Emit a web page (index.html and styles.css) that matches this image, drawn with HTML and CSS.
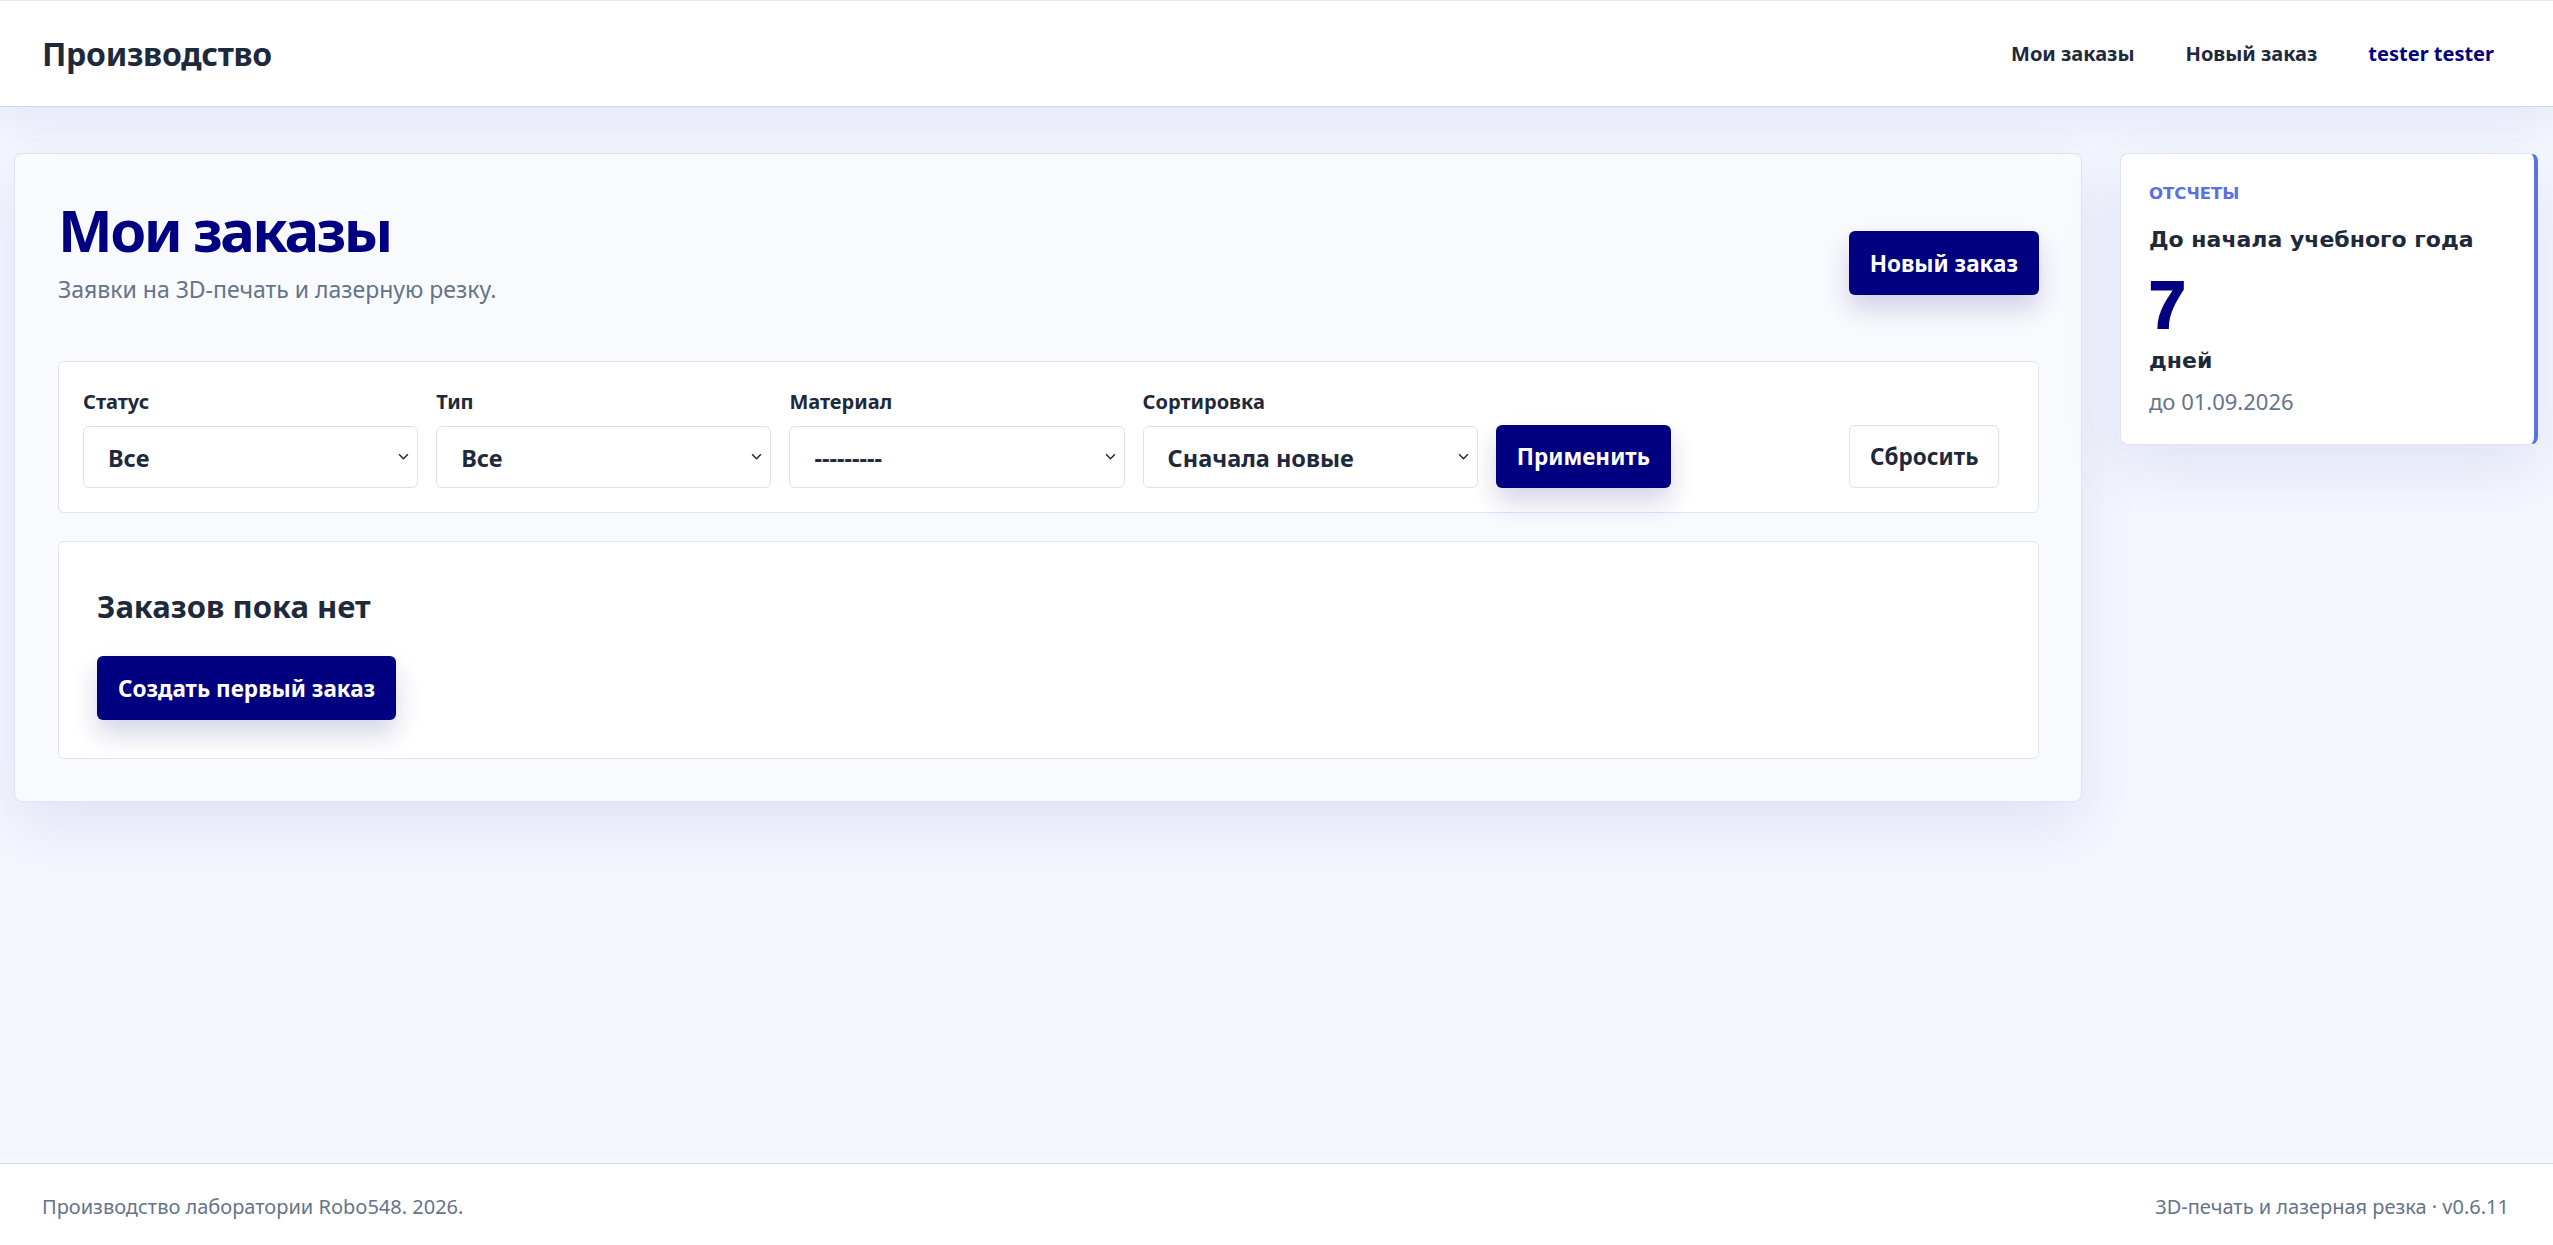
FILE: index.html
```html
<!DOCTYPE html>
<html lang="ru">
<head>
  <meta charset="UTF-8">
  <meta name="viewport" content="width=device-width, initial-scale=1.0">
  <title>Мои заказы — Производство</title>
  <link rel="stylesheet" href="styles.css">
</head>
<body>
  <header class="topbar">
    <a class="brand" href="#">Производство</a>
    <nav class="topnav">
      <a href="#">Мои заказы</a>
      <a href="#">Новый заказ</a>
      <a href="#" class="user">tester tester</a>
    </nav>
  </header>

  <main class="layout">
    <section class="panel">
      <div class="panel-head">
        <div>
          <h1>Мои заказы</h1>
          <p class="lead">Заявки на 3D-печать и лазерную резку.</p>
        </div>
        <a href="#" class="btn btn-primary head-btn">Новый заказ</a>
      </div>

      <form class="filters">
        <div class="field">
          <label for="status">Статус</label>
          <div class="select-wrap">
            <select id="status">
              <option>Все</option>
            </select>
            <svg class="chevron" viewBox="0 0 10 6"><path d="M1 1l4 4 4-4"/></svg>
          </div>
        </div>
        <div class="field">
          <label for="kind">Тип</label>
          <div class="select-wrap">
            <select id="kind">
              <option>Все</option>
            </select>
            <svg class="chevron" viewBox="0 0 10 6"><path d="M1 1l4 4 4-4"/></svg>
          </div>
        </div>
        <div class="field">
          <label for="material">Материал</label>
          <div class="select-wrap">
            <select id="material">
              <option>---------</option>
            </select>
            <svg class="chevron" viewBox="0 0 10 6"><path d="M1 1l4 4 4-4"/></svg>
          </div>
        </div>
        <div class="field">
          <label for="sort">Сортировка</label>
          <div class="select-wrap">
            <select id="sort">
              <option>Сначала новые</option>
            </select>
            <svg class="chevron" viewBox="0 0 10 6"><path d="M1 1l4 4 4-4"/></svg>
          </div>
        </div>
        <div class="field field-btn">
          <button type="submit" class="btn btn-primary">Применить</button>
        </div>
        <div class="field field-btn">
          <button type="reset" class="btn btn-light">Сбросить</button>
        </div>
      </form>

      <div class="empty">
        <h2>Заказов пока нет</h2>
        <a href="#" class="btn btn-primary">Создать первый заказ</a>
      </div>
    </section>

    <aside class="side">
      <div class="stat-card">
        <div class="stat-label">Отсчеты</div>
        <div class="stat-title">До начала учебного года</div>
        <div class="stat-value">7</div>
        <div class="stat-unit">дней</div>
        <div class="stat-note">до 01.09.2026</div>
      </div>
    </aside>
  </main>

  <footer class="footer">
    <span>Производство лаборатории Robo548. 2026.</span>
    <span>3D-печать и лазерная резка · v0.6.11</span>
  </footer>
</body>
</html>
```

FILE: styles.css
```css
/* Общие стили */
* {
  box-sizing: border-box;
}

html,
body {
  margin: 0;
  min-height: 100%;
}

body {
  min-height: 100vh;
  display: flex;
  flex-direction: column;
  font-family: "Segoe UI", "Noto Sans", "Open Sans", sans-serif;
  color: #1e293b;
  background: #f4f7fe;
}

a {
  text-decoration: none;
  color: inherit;
}

/* Шапка */
.topbar {
  position: relative;
  z-index: 2;
  height: 107px;
  display: flex;
  align-items: center;
  justify-content: space-between;
  padding: 0 59px 0 42px;
  background: #fff;
  border-top: 1px solid #e6e8ee;
  border-bottom: 1px solid #d3d6ef;
  box-shadow: 0 14px 44px rgba(50, 60, 170, 0.09);
}

.brand {
  font-size: 32px;
  line-height: 40px;
  font-weight: 700;
  color: #1e293b;
  letter-spacing: -0.3px;
}

.topnav {
  display: flex;
  gap: 51px;
}

.topnav a {
  font-size: 20px;
  line-height: 30px;
  font-weight: 700;
  color: #1e293b;
}

.topnav .user {
  color: #000080;
}

/* Основная сетка */
.layout {
  flex: 1;
  display: grid;
  grid-template-columns: 1fr 418px;
  gap: 38px;
  align-items: start;
  padding: 46px 15px 60px 14px;
}

.panel {
  background: #f9fafe;
  border: 1px solid #e0e3f4;
  border-radius: 8px;
  padding: 44px 42px 42px 43px;
  box-shadow: 0 24px 60px rgba(50, 60, 160, 0.10);
}

.panel-head {
  display: flex;
  justify-content: space-between;
  align-items: flex-start;
  margin-bottom: 57px;
}

.panel-head h1 {
  margin: 0;
  font-size: 58px;
  line-height: 64px;
  font-weight: 700;
  color: #000080;
  letter-spacing: -2.5px;
}

.lead {
  margin: 12px 0 0;
  font-size: 23px;
  line-height: 30px;
  color: #64748b;
}

.head-btn {
  margin-top: 33px;
}

/* Кнопки */
.btn {
  display: inline-flex;
  align-items: center;
  justify-content: center;
  height: 64px;
  padding: 0 20px;
  border-radius: 6px;
  border: 1px solid transparent;
  font-family: inherit;
  font-size: 22.5px;
  font-weight: 700;
  cursor: pointer;
}

.btn-primary {
  background: #000080;
  color: #fff;
  box-shadow: 0 14px 26px rgba(20, 20, 130, 0.18);
}

.btn-light {
  background: #fff;
  color: #1e293b;
  border-color: #dde2f0;
}

/* Фильтры */
.filters {
  display: grid;
  grid-template-columns: repeat(5, 1fr) 148px;
  gap: 18px;
  align-items: end;
  padding: 27px 41px 24px 24px;
  background: #fff;
  border: 1px solid #dfe3f3;
  border-radius: 6px;
  margin-bottom: 28px;
}

.field label {
  display: block;
  margin-bottom: 12px;
  font-size: 20px;
  line-height: 25px;
  font-weight: 700;
  color: #1e293b;
}

.select-wrap {
  position: relative;
}

.field select {
  width: 100%;
  height: 62px;
  padding: 2px 34px 0 24px;
  background: #fff;
  border: 1px solid #dde2f0;
  border-radius: 6px;
  font-family: inherit;
  font-size: 23.5px;
  font-weight: 700;
  color: #1e293b;
  appearance: none;
  -webkit-appearance: none;
}

/* стрелка поверх select */
.chevron {
  position: absolute;
  right: 9px;
  top: 27px;
  width: 11px;
  height: 7px;
  fill: none;
  stroke: #1e293b;
  stroke-width: 1.4;
  pointer-events: none;
}

.field-btn .btn {
  height: 63px;
}

/* Пустой список */
.empty {
  background: #fff;
  border: 1px solid #dfe3f3;
  border-radius: 6px;
  padding: 44px 38px 38px;
}

.empty h2 {
  margin: 0 0 30px;
  font-size: 31px;
  line-height: 40px;
  font-weight: 700;
  color: #1e293b;
}

/* Боковая карточка */
.stat-card {
  background: #fff;
  border: 1px solid #e0e3f4;
  border-right: 4px solid #5a74df;
  border-radius: 8px;
  padding: 28px 28px 28px;
  box-shadow: 0 24px 60px rgba(50, 60, 160, 0.10);
}

.stat-label {
  font-family: "DejaVu Sans", Verdana, sans-serif;
  font-size: 16.5px;
  line-height: 24px;
  font-weight: 700;
  text-transform: uppercase;
  color: #5a6fe0;
}

.stat-title {
  margin-top: 18px;
  font-family: "DejaVu Sans", Verdana, sans-serif;
  font-size: 22px;
  line-height: 32px;
  font-weight: 700;
}

.stat-value {
  margin-top: 16px;
  font-family: "Liberation Sans", Arial, sans-serif;
  font-size: 66px;
  line-height: 66px;
  font-weight: 700;
  color: #000080;
  -webkit-text-stroke: 2px #000080;
}

.stat-unit {
  margin-top: 9px;
  font-family: "DejaVu Sans", Verdana, sans-serif;
  font-size: 22px;
  line-height: 28px;
  font-weight: 700;
}

.stat-note {
  margin-top: 11px;
  font-size: 22px;
  line-height: 30px;
  color: #64748b;
}

/* Подвал */
.footer {
  display: flex;
  justify-content: space-between;
  padding: 29px 44px 24px 42px;
  background: #fff;
  border-top: 1px solid #dadef0;
  font-size: 20px;
  line-height: 28px;
  color: #64748b;
}
```
